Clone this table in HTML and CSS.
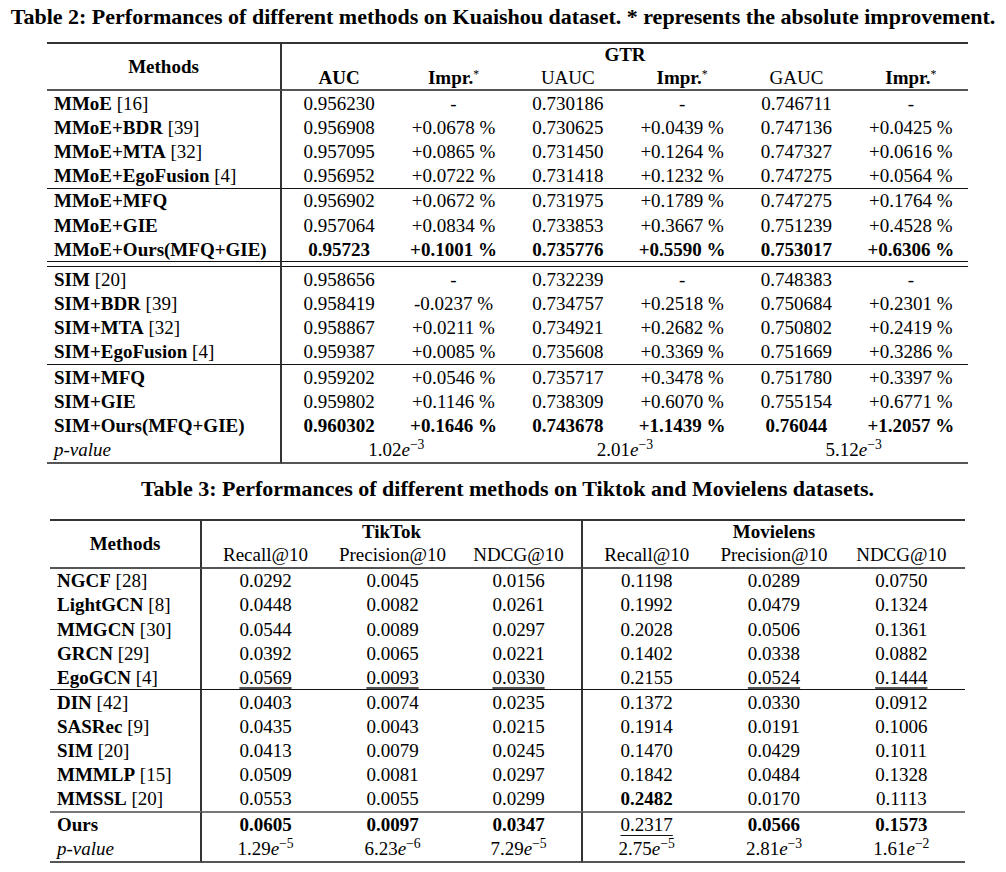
FILE: index.html
```html
<!DOCTYPE html>
<html>
<head>
<meta charset="utf-8">
<link rel="stylesheet" href="styles.css">
</head>
<body>
<div class="cap cap2">Table 2: Performances of different methods on Kuaishou dataset. * represents the absolute improvement.</div>
<div class="wrap">
<table class="tbl t2">
<colgroup><col class="c2m"><col class="c2"><col class="c2"><col class="c2"><col class="c2"><col class="c2"><col class="c2"></colgroup>
<thead>
<tr class="h1"><th class="mh" rowspan="2">Methods</th><th class="b" colspan="6">GTR</th></tr>
<tr class="h2"><th class="b">AUC</th><th class="b">Impr.<sup class="ast">*</sup></th><th>UAUC</th><th class="b">Impr.<sup class="ast">*</sup></th><th>GAUC</th><th class="b">Impr.<sup class="ast">*</sup></th></tr>
</thead>
<tbody>
<tr class="r"><td class="m"><b>MMoE</b> [16]</td><td>0.956230</td><td>-</td><td>0.730186</td><td>-</td><td>0.746711</td><td>-</td></tr>
<tr class="r"><td class="m"><b>MMoE+BDR</b> [39]</td><td>0.956908</td><td>+0.0678 %</td><td>0.730625</td><td>+0.0439 %</td><td>0.747136</td><td>+0.0425 %</td></tr>
<tr class="r"><td class="m"><b>MMoE+MTA</b> [32]</td><td>0.957095</td><td>+0.0865 %</td><td>0.731450</td><td>+0.1264 %</td><td>0.747327</td><td>+0.0616 %</td></tr>
<tr class="r"><td class="m"><b>MMoE+EgoFusion</b> [4]</td><td>0.956952</td><td>+0.0722 %</td><td>0.731418</td><td>+0.1232 %</td><td>0.747275</td><td>+0.0564 %</td></tr>
<tr class="r sep"><td class="m"><b>MMoE+MFQ</b></td><td>0.956902</td><td>+0.0672 %</td><td>0.731975</td><td>+0.1789 %</td><td>0.747275</td><td>+0.1764 %</td></tr>
<tr class="r"><td class="m"><b>MMoE+GIE</b></td><td>0.957064</td><td>+0.0834 %</td><td>0.733853</td><td>+0.3667 %</td><td>0.751239</td><td>+0.4528 %</td></tr>
<tr class="r bold"><td class="m">MMoE+Ours(MFQ+GIE)</td><td>0.95723</td><td>+0.1001 %</td><td>0.735776</td><td>+0.5590 %</td><td>0.753017</td><td>+0.6306 %</td></tr>
<tr class="r dbl"><td class="m"><b>SIM</b> [20]</td><td>0.958656</td><td>-</td><td>0.732239</td><td>-</td><td>0.748383</td><td>-</td></tr>
<tr class="r"><td class="m"><b>SIM+BDR</b> [39]</td><td>0.958419</td><td>-0.0237 %</td><td>0.734757</td><td>+0.2518 %</td><td>0.750684</td><td>+0.2301 %</td></tr>
<tr class="r"><td class="m"><b>SIM+MTA</b> [32]</td><td>0.958867</td><td>+0.0211 %</td><td>0.734921</td><td>+0.2682 %</td><td>0.750802</td><td>+0.2419 %</td></tr>
<tr class="r"><td class="m"><b>SIM+EgoFusion</b> [4]</td><td>0.959387</td><td>+0.0085 %</td><td>0.735608</td><td>+0.3369 %</td><td>0.751669</td><td>+0.3286 %</td></tr>
<tr class="r sep"><td class="m"><b>SIM+MFQ</b></td><td>0.959202</td><td>+0.0546 %</td><td>0.735717</td><td>+0.3478 %</td><td>0.751780</td><td>+0.3397 %</td></tr>
<tr class="r"><td class="m"><b>SIM+GIE</b></td><td>0.959802</td><td>+0.1146 %</td><td>0.738309</td><td>+0.6070 %</td><td>0.755154</td><td>+0.6771 %</td></tr>
<tr class="r bold"><td class="m">SIM+Ours(MFQ+GIE)</td><td>0.960302</td><td>+0.1646 %</td><td>0.743678</td><td>+1.1439 %</td><td>0.76044</td><td>+1.2057 %</td></tr>
<tr class="r last"><td class="m"><i>p-value</i></td><td colspan="2">1.02<i>e</i><sup class="ex">−3</sup></td><td colspan="2">2.01<i>e</i><sup class="ex">−3</sup></td><td colspan="2">5.12<i>e</i><sup class="ex">−3</sup></td></tr>
</tbody>
</table>

<div class="cap cap3">Table 3: Performances of different methods on Tiktok and Movielens datasets.</div>

<table class="tbl t3">
<colgroup><col class="c3m"><col class="c3"><col class="c3"><col class="c3"><col class="c3b"><col class="c3b"><col class="c3b"></colgroup>
<thead>
<tr class="h1"><th class="mh" rowspan="2">Methods</th><th class="b vr" colspan="3">TikTok</th><th class="b" colspan="3">Movielens</th></tr>
<tr class="h2"><th>Recall@10</th><th>Precision@10</th><th class="vr">NDCG@10</th><th>Recall@10</th><th>Precision@10</th><th>NDCG@10</th></tr>
</thead>
<tbody>
<tr class="r"><td class="m"><b>NGCF</b> [28]</td><td>0.0292</td><td>0.0045</td><td class="vr">0.0156</td><td>0.1198</td><td>0.0289</td><td>0.0750</td></tr>
<tr class="r"><td class="m"><b>LightGCN</b> [8]</td><td>0.0448</td><td>0.0082</td><td class="vr">0.0261</td><td>0.1992</td><td>0.0479</td><td>0.1324</td></tr>
<tr class="r"><td class="m"><b>MMGCN</b> [30]</td><td>0.0544</td><td>0.0089</td><td class="vr">0.0297</td><td>0.2028</td><td>0.0506</td><td>0.1361</td></tr>
<tr class="r"><td class="m"><b>GRCN</b> [29]</td><td>0.0392</td><td>0.0065</td><td class="vr">0.0221</td><td>0.1402</td><td>0.0338</td><td>0.0882</td></tr>
<tr class="r"><td class="m"><b>EgoGCN</b> [4]</td><td><span class="ul">0.0569</span></td><td><span class="ul">0.0093</span></td><td class="vr"><span class="ul">0.0330</span></td><td>0.2155</td><td><span class="ul">0.0524</span></td><td><span class="ul">0.1444</span></td></tr>
<tr class="r sep"><td class="m"><b>DIN</b> [42]</td><td>0.0403</td><td>0.0074</td><td class="vr">0.0235</td><td>0.1372</td><td>0.0330</td><td>0.0912</td></tr>
<tr class="r"><td class="m"><b>SASRec</b> [9]</td><td>0.0435</td><td>0.0043</td><td class="vr">0.0215</td><td>0.1914</td><td>0.0191</td><td>0.1006</td></tr>
<tr class="r"><td class="m"><b>SIM</b> [20]</td><td>0.0413</td><td>0.0079</td><td class="vr">0.0245</td><td>0.1470</td><td>0.0429</td><td>0.1011</td></tr>
<tr class="r"><td class="m"><b>MMMLP</b> [15]</td><td>0.0509</td><td>0.0081</td><td class="vr">0.0297</td><td>0.1842</td><td>0.0484</td><td>0.1328</td></tr>
<tr class="r"><td class="m"><b>MMSSL</b> [20]</td><td>0.0553</td><td>0.0055</td><td class="vr">0.0299</td><td><b>0.2482</b></td><td>0.0170</td><td>0.1113</td></tr>
<tr class="r sep2"><td class="m"><b>Ours</b></td><td><b>0.0605</b></td><td><b>0.0097</b></td><td class="vr"><b>0.0347</b></td><td><span class="ul2">0.2317</span></td><td><b>0.0566</b></td><td><b>0.1573</b></td></tr>
<tr class="r last"><td class="m"><i>p-value</i></td><td>1.29<i>e</i><sup class="ex">−5</sup></td><td>6.23<i>e</i><sup class="ex">−6</sup></td><td class="vr">7.29<i>e</i><sup class="ex">−5</sup></td><td>2.75<i>e</i><sup class="ex">−5</sup></td><td>2.81<i>e</i><sup class="ex">−3</sup></td><td>1.61<i>e</i><sup class="ex">−2</sup></td></tr>
</tbody>
</table>
</div>
</body>
</html>
```
FILE: styles.css
```css
html, body {
  margin: 0;
  padding: 0;
  background: #fff;
}
body {
  width: 1006px;
  font-family: "Liberation Serif", "Times New Roman", serif;
  color: #000;
}
.cap {
  font-family: "Liberation Serif", serif;
  font-weight: bold;
  font-size: 22px;
  line-height: 24px;
  text-align: center;
  white-space: nowrap;
}
.cap2 {
  padding-top: 5px;
  margin-bottom: 13px;
}
.wrap {
  padding-left: 9px;
}
.cap3 {
  margin-top: 13px;
  margin-bottom: 18px;
}
.tbl {
  border-collapse: separate;
  border-spacing: 0;
  table-layout: fixed;
  margin: 0 auto;
  font-family: "Liberation Serif", serif;
  font-size: 19px;
}
.t2 { width: 921px; }
.t3 { width: 915px; }
.c2m { width: 235px; }
.c2 { width: 114.33px; }
.c3m { width: 152px; }
.c3 { width: 127px; }
.c3b { width: 127.33px; }

.tbl th, .tbl td {
  padding: 0;
  text-align: center;
  vertical-align: middle;
  white-space: nowrap;
  font-weight: normal;
  line-height: 21px;
  box-sizing: border-box;
}
.tbl th.b, .tbl .bold td { font-weight: bold; }
.tbl b { font-weight: bold; }

.tbl .m {
  text-align: left;
  padding-left: 7px;
  border-right: 2px solid #333;
}
.tbl .vr {
  border-right: 2px solid #333;
}
.tbl .mh {
  text-align: center;
  font-weight: bold;
  border-right: 2px solid #333;
  border-top: 2px solid #333;
  border-bottom: 2px solid #555;
}
.t2 .h1 { height: 22px; }
.t2 .h2 { height: 26px; }
.t3 .h1 { height: 23px; }
.t3 .h2 { height: 27px; }
.tbl .h1 th { border-top: 2px solid #333; }
.tbl .h2 th { border-bottom: 2px solid #555; }

.ast {
  font-weight: normal;
  font-size: 0.62em;
  line-height: 0;
  vertical-align: 0.55em;
}
.ex {
  font-size: 0.72em;
  line-height: 0;
  vertical-align: 0.5em;
}

.t2 .r { height: 24.2px; }
.t3 .r { height: 24.1px; }
.t2 .r.sep { height: 25.2px; }
.t3 .r.sep { height: 25.1px; }
.tbl .r.sep td { border-top: 1px solid #111; }
.t2 .r.dbl { height: 30.2px; }
.tbl .r.dbl td {
  border-top: 1px solid #111;
  padding-top: 5px;
  box-shadow: inset 0 4px 0 #fff, inset 0 5px 0 #111;
}
.tbl .r.dbl td.m { padding-left: 7px; }
.t3 .r.sep2 { height: 26.1px; }
.tbl .r.sep2 td { border-top: 2px solid #777; }
.t2 .r.last { height: 26.2px; }
.t3 .r.last { height: 26.1px; }
.tbl .r.last td { border-bottom: 2px solid #555; }

.ul {
  text-decoration: underline;
  text-decoration-thickness: 2px;
  text-decoration-color: #555;
  text-underline-offset: 3px;
}
.ul2 {
  text-decoration: underline;
  text-decoration-thickness: 1px;
  text-decoration-color: #111;
  text-underline-offset: 4px;
}
```
